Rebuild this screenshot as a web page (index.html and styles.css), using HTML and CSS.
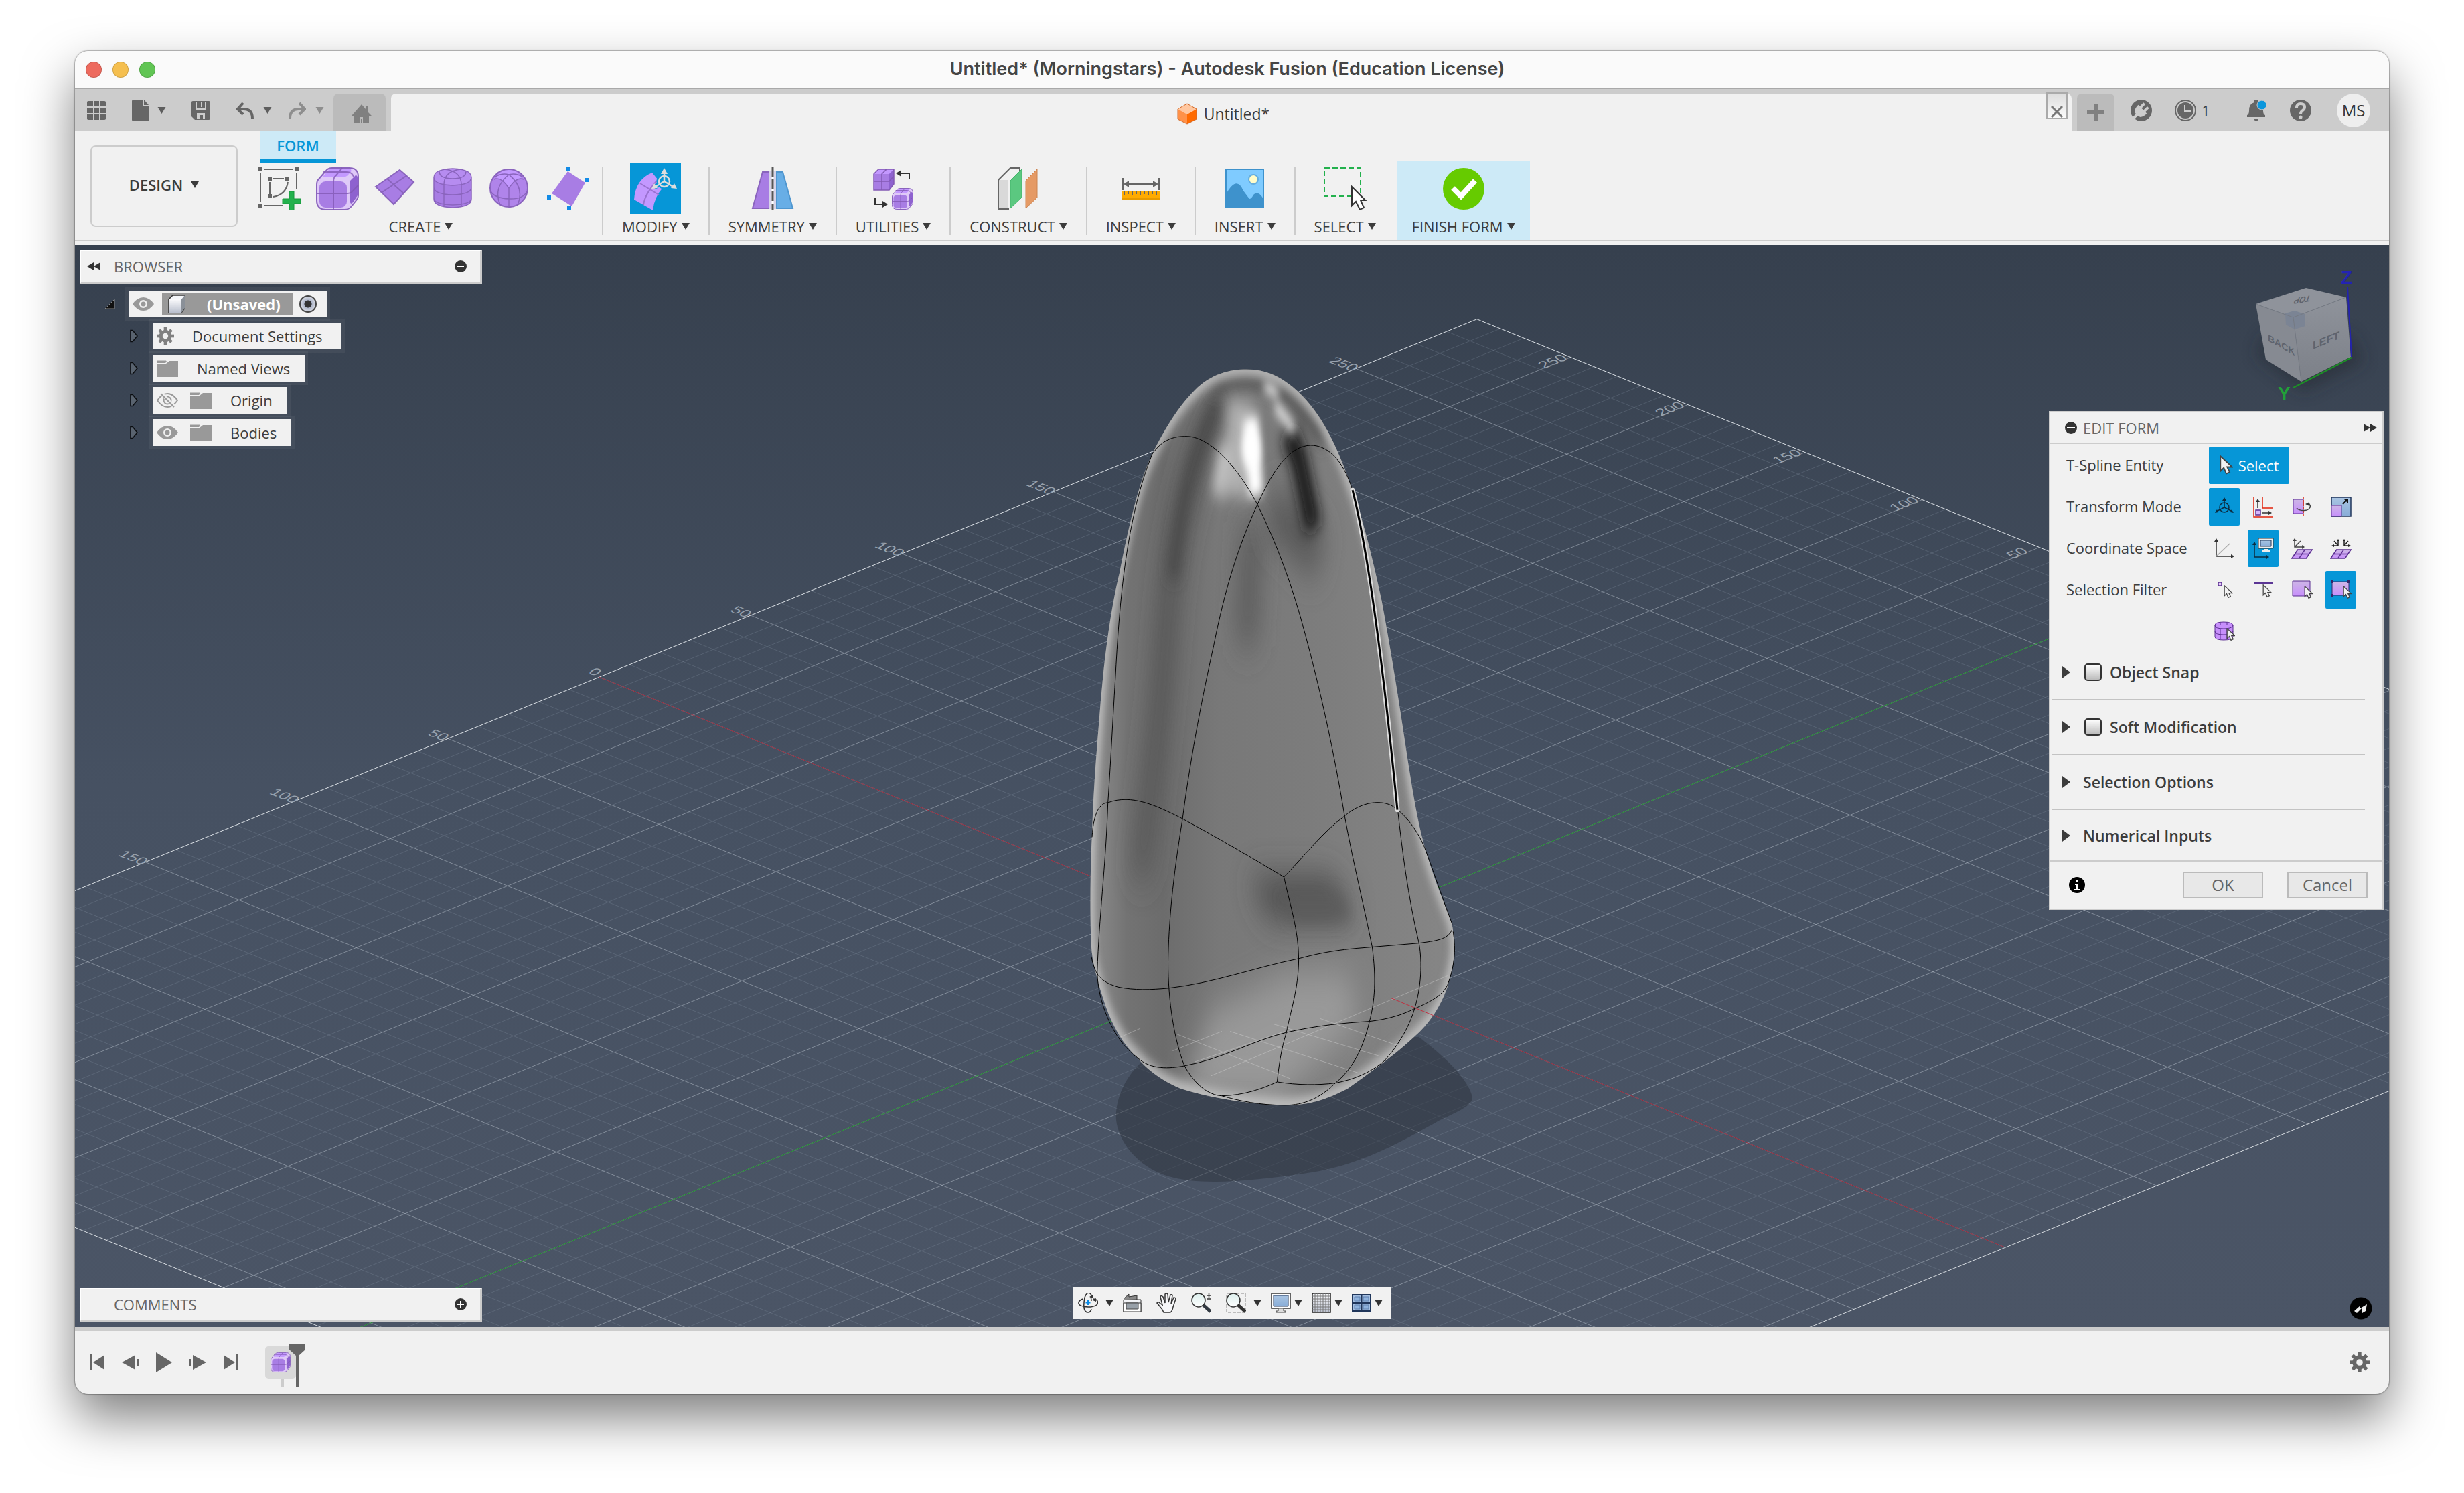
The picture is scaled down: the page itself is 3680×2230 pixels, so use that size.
FILE: index.html
```html
<!DOCTYPE html>
<html lang="en">

<head>
    <meta charset="UTF-8">
    <meta name="viewport" content="width=device-width, initial-scale=1.0">
    <title>Untitled* (Morningstars) - Autodesk Fusion (Education License)</title>
    <link rel="stylesheet" href="styles.css">
</head>

<body>
    <!-- shared icons -->
    <svg class="defs" aria-hidden="true">
        <defs>
            <linearGradient id="glass" x1="0" y1="0" x2="0" y2="1">
                <stop offset="0" stop-color="#dcefed" /><stop offset="1" stop-color="#fff" />
            </linearGradient>
            <linearGradient id="screen" x1="0" y1="0" x2="0" y2="1">
                <stop offset="0" stop-color="#a9c4e2" /><stop offset="1" stop-color="#88add8" />
            </linearGradient>
            <linearGradient id="lilac" x1="0" y1="0" x2="0" y2="1">
                <stop offset="0" stop-color="#cdb6e6" /><stop offset="1" stop-color="#c78ffb" />
            </linearGradient>
            <linearGradient id="steel" x1="0" y1="0" x2="0" y2="1">
                <stop offset="0" stop-color="#fafafc" /><stop offset="1" stop-color="#b9bfcd" />
            </linearGradient>
        </defs>
        <symbol id="down" viewBox="0 0 12 10"><path d="M0 0h12L6 10z" fill="currentColor" /></symbol>
        <symbol id="right" viewBox="0 0 12 18"><path d="M0 0l12 9-12 9z" fill="currentColor" /></symbol>
        <symbol id="pointer" viewBox="0 0 16 24"><path d="M1 1v18l4-4 3 7 4-2-3-6h6z" fill="#f2f2f2" stroke="#444" stroke-width="1.500" /></symbol>
        <symbol id="eye" viewBox="0 0 32 20">
            <path d="M0 10Q7 0 16 0t16 10Q25 20 16 20T0 10z" fill="#999" />
            <circle cx="16" cy="10" r="6" fill="#f0f0f0" /><circle cx="16" cy="10" r="3.500" fill="#999" />
        </symbol>
        <symbol id="eye-off" viewBox="0 0 32 22">
            <path d="M1 11Q8 1 16 1t15 10Q24 21 16 21T1 11z" fill="none" stroke="#999" stroke-width="2" />
            <circle cx="16" cy="11" r="5.500" fill="none" stroke="#999" stroke-width="2" />
            <path d="M6 0l21 21" stroke="#f0f0f0" stroke-width="5" /><path d="M6 1l20 20" stroke="#999" stroke-width="2" />
        </symbol>
        <symbol id="folder" viewBox="0 0 32 26">
            <path d="M0 1.500h14l1 1.500-2 2H0z M0 6h14l5-4h13v24H0z" fill="#999" />
        </symbol>
        <symbol id="gear" viewBox="0 0 28 28">
            <g fill="currentColor">
                <path id="tooth" d="M11.500 0h5v28h-5z" />
                <use href="#tooth" transform="rotate(45 14 14)" />
                <use href="#tooth" transform="rotate(90 14 14)" />
                <use href="#tooth" transform="rotate(135 14 14)" />
                <circle cx="14" cy="14" r="10" />
            </g>
            <circle cx="14" cy="14" r="4.500" fill="#f0f0f0" />
        </symbol>
        <symbol id="tree-arrow" viewBox="0 0 14 20"><path d="M2 1.500h3L12 10l-7 8.500H2z" fill="#59636f" stroke="#0b0d10" stroke-width="1.500" /></symbol>
        <symbol id="rewind" viewBox="0 0 20 12"><path d="M0 6l10-6v12z M10 6l10-6v12z" fill="#333" /></symbol>
        <symbol id="boxform" viewBox="0 0 64 64">
            <path d="M2 20L14 6q4-5 10-5h26q13 0 13 13v28q0 3-2 6L53 58q-4 5-10 5H15Q1 63 1 49V26q0-3 1-6z" fill="#dfc9f8" stroke="#8a64bd" stroke-width="2" />
            <rect x="5" y="21" width="41" height="39" rx="9" fill="#a87de4" />
            <path d="M10 14l8-9q2-3 6-3h24q6 0 4 5l-6 6q-3 2-6 2z" fill="#c398ff" />
            <path d="M51 20l8-8q3 0 3 4v26l-6 9q-5 6-5 0z" fill="#8e62cf" />
            <path d="M1 39h46q5 0 9-5l7-7 M26 63V21q0-6 4-9l9-11 M11 7h34q9 0 11 7" fill="none" stroke="#8259b4" stroke-width="2" opacity=".8" />
        </symbol>
        <symbol id="plane" viewBox="0 0 30 14"><path d="M9 1h20l-8 12H1z" fill="url(#lilac)" stroke="#5b2e91" stroke-width="1.500" /><path d="M19 1l-8 12 M5 7h20" stroke="#5b2e91" stroke-width="1.500" /></symbol>
    </svg>

    <main class="window">
        <header class="titlebar">
            <div class="lights"><i class="red"></i><i class="yellow"></i><i class="green"></i></div>
            <h1>Untitled* (Morningstars) - Autodesk Fusion (Education License)</h1>
        </header>

        <nav class="tabbar">
            <div class="tools">
                <button aria-label="Data panel"><svg width="28" height="28" fill="#666"><path d="M0 2q0-2 2-2h7v8H0z M10 0h8v8h-8z M19 0h7q2 0 2 2v6h-9z M0 10h9v8H0z M10 10h8v8h-8z M19 10h9v8h-9z M0 20h9v8H2q-2 0-2-2z M10 20h8v8h-8z M19 20h9v6q0 2-2 2h-7z" /></svg></button>
                <button aria-label="File"><svg width="26" height="32" fill="#666"><path d="M2 0h14v10h10v20q0 2-2 2H2q-2 0-2-2V2q0-2 2-2z M18 0l7 8h-7z" /></svg><svg class="drop" width="15" height="10"><use href="#down" /></svg></button>
                <button aria-label="Save"><svg width="28" height="28"><path d="M2 0h24q2 0 2 2v24q0 2-2 2H5l-5-5V2q0-2 2-2z" fill="#666" /><path d="M6 2h2v9h12V2h2v11H6z M8 18h12v8h-3v-5h-4v5H8z M14 2h2v7h-2z" fill="#ccc" /></svg></button>
                <button aria-label="Undo"><svg width="26" height="24"><path d="M10 1L2 10l8 8 M2 10h9q13 0 13 14" fill="none" stroke="#666" stroke-width="4" /></svg><svg class="drop wide" width="15" height="10"><use href="#down" /></svg></button>
                <button class="off" aria-label="Redo"><svg width="26" height="24"><path d="M16 1l8 9-8 8 M24 10h-9Q2 10 2 24" fill="none" stroke="#8e8e8e" stroke-width="4" /></svg><svg class="drop wide" width="15" height="10"><use href="#down" /></svg></button>
            </div>
            <button class="tab home" aria-label="Home"><svg width="30" height="28" fill="#808080"><path d="M15 0l6 7V3h4v9l5 5h-4v11H17v-9h-4v9H4V17H0z M14 21h2v7h-2z" /></svg></button>
            <div class="tab document">
                <svg width="30" height="32"><path d="M15 1L1 9v15l14 7z" fill="#ff9148" /><path d="M15 1l14 8v15l-14 7z" fill="#ff6a00" /><path d="M15 1l14 8-14 8L1 9z" fill="#ffc7a0" /><path d="M15 1l14 8v15l-14 7L1 24V9z" fill="none" stroke="#d0692a" /></svg>
                <span>Untitled*</span>
                <button class="close" aria-label="Close tab"><svg width="18" height="18"><path d="M1 1l16 16M17 1L1 17" stroke="#777" stroke-width="3" /></svg></button>
            </div>
            <button class="tab add" aria-label="New design"><svg width="26" height="26"><path d="M13 0v26M0 13h26" stroke="#808080" stroke-width="6" /></svg></button>
            <div class="status">
                <button aria-label="Extensions"><svg width="32" height="32"><circle cx="16" cy="16" r="16" fill="#666" /><g transform="translate(15 17) rotate(45)" fill="#ccc"><path d="M-9-4H9v3q-1 9-7 9V18h-4V8Q-8 8-9-1z" /><path d="M-6-12h4v9h-4z M2-12h4v9H2z" /></g></svg></button>
                <button aria-label="Job status"><svg width="32" height="32"><circle cx="16" cy="16" r="15" fill="none" stroke="#666" stroke-width="2" /><circle cx="16" cy="16" r="12" fill="#666" /><path d="M15 8v9h9" fill="none" stroke="#ccc" stroke-width="2" /></svg><b>1</b></button>
                <button aria-label="Notifications"><svg width="30" height="32"><path d="M11 0h5v4q8 2 8 12 0 6 3 7v3H0v-3q3-1 3-7Q3 6 11 4z M9 28h9q-4 7-9 0z" fill="#666" /><circle cx="22" cy="8" r="7" fill="#0a96dc" stroke="#ccc" /></svg></button>
                <button aria-label="Help"><svg width="32" height="32"><circle cx="16" cy="16" r="16" fill="#666" /><path d="M10 12q0-6 6-6t6 5q0 3-3 5t-3 5" fill="none" stroke="#ccc" stroke-width="4" /><circle cx="16" cy="26" r="2.500" fill="#ccc" /></svg></button>
                <button class="avatar">MS</button>
            </div>
        </nav>

        <section class="ribbon">
            <button class="workspace">DESIGN <svg width="12" height="10"><use href="#down" /></svg></button>
            <div class="ribbon-main">
                <button class="form-tab">FORM</button>
                <div class="groups">
                    <div class="group create">
                        <div class="icons">
                            <button aria-label="Create Sketch"><svg width="64" height="64" viewBox="0 0 64 64">
                                <path d="M9 3h43 M3 9v43 M57 9v24 M9 57h28 M22 17h16 M17 22v18 M44 22q-3 19-22 22" fill="none" stroke="#666" stroke-width="2" />
                                <path d="M0 0h6v6H0z M54 0h6v6h-6z M0 54h6v6H0z M14 14h6v6h-6z M40 14h6v6h-6z M14 40h6v6h-6z" fill="#666" />
                                <path d="M46 36h7v11h10v7H53v10h-7V54H36v-7h10z" fill="#23b14d" stroke="#18963c" stroke-width="1" /></svg></button>
                            <button aria-label="Box"><svg width="64" height="64"><use href="#boxform" /></svg></button>
                            <button aria-label="Plane"><svg width="64" height="64" viewBox="0 0 64 64"><path d="M3 29L39 4l21 18-30 33z M20 17l25 22 M13 37L50 12" fill="#a87de4" stroke="#8a64bd" stroke-width="2" /></svg></button>
                            <button aria-label="Cylinder"><svg width="64" height="64" viewBox="0 0 64 64">
                                <path d="M4 15q0-12 28-13 28 1 28 13v32q0 12-28 13Q4 59 4 47z" fill="#a87de4" /><path d="M4 15q0-12 28-13 28 1 28 13 0 11-28 12Q4 26 4 15z" fill="#b68cf0" />
                                <path d="M4 15q0-12 28-13 28 1 28 13v32q0 12-28 13Q4 59 4 47z M4 15q0 11 28 12 28-1 28-12 M4 30q0 10 28 11 28-1 28-11 M4 46q0 9 28 10 28-1 28-10 M19 25v33 M45 25v33 M12 6q0 11 20 11T52 6 M19 25Q20 5 45 3 M45 25Q44 5 19 3" fill="none" stroke="#8a64bd" stroke-width="1.500" /></svg></button>
                            <button aria-label="Quadball"><svg width="64" height="64" viewBox="0 0 64 64"><circle cx="30" cy="31" r="28" fill="#b084ea" /><path d="M10 18q8-3 20 12 12-15 20-12Q42 3 30 3T10 18z" fill="#c398ff" />
                                <circle cx="30" cy="31" r="28" fill="none" stroke="#8a64bd" stroke-width="2" />
                                <path d="M30 31V59 M30 31Q18 13 8 18 M30 31Q42 13 52 18 M30 11Q6 30 17 56 M30 11Q54 30 43 56 M3 36q6 10 27 11t27-11 M10 14q10-6 20-3 10-3 20 3" fill="none" stroke="#8a64bd" stroke-width="1.500" /></svg></button>
                            <button aria-label="Face"><svg width="64" height="64" viewBox="0 0 64 64"><path d="M32 6l26 17-20 35L8 39z" fill="#a87de4" /><path d="M29 0h6v6h-6z M58 16h6v6h-6z M1 42h6v6H1z M31 58h6v6h-6z" fill="#128be6" /></svg></button>
                        </div>
                        <button class="label">CREATE<svg width="12" height="10"><use href="#down" /></svg></button>
                    </div>
                    <i class="sep"></i>
                    <div class="group">
                        <div class="icons"><button class="on" aria-label="Edit Form"><svg width="76" height="76" viewBox="0 0 76 76">
                            <path d="M6 54Q8 24 33 14l17 21Q36 50 34 70z" fill="#c398ff" /><path d="M20 62Q22 46 40 26 M15 30l28 17" fill="none" stroke="#9a72d0" stroke-width="2" />
                            <g stroke="#0696d7" stroke-width="7" fill="none"><circle cx="51" cy="27" r="8" /><path d="M51 27V12 M51 27L36 36 M51 27l15 9" /></g>
                            <g stroke="#ddd" stroke-width="2.500" fill="none"><circle cx="51" cy="27" r="8" /><path d="M51 27V12 M51 27L36 36 M51 27l15 9" /></g>
                            <path d="M46 16l5-9 5 9z M32 38l4-8 5 7z M70 38l-4-8-5 7z" fill="#ddd" /></svg></button></div>
                        <button class="label">MODIFY<svg width="12" height="10"><use href="#down" /></svg></button>
                    </div>
                    <i class="sep"></i>
                    <div class="group">
                        <div class="icons"><button aria-label="Mirror"><svg width="64" height="64" viewBox="0 0 64 64">
                            <path d="M17 7h10v54H2z" fill="#a87de4" stroke="#8a64bd" stroke-width="2" /><path d="M37 7h10l15 54H37z" fill="#68aee6" stroke="#4f96cf" stroke-width="2" />
                            <path d="M27 6h10v56H27z" fill="#d6d3e8" /><path d="M32 0v64" stroke="#fff" stroke-width="3" /><path d="M32 0v64" stroke="#555" stroke-width="3" stroke-dasharray="14 4" /></svg></button></div>
                        <button class="label">SYMMETRY<svg width="12" height="10"><use href="#down" /></svg></button>
                    </div>
                    <i class="sep"></i>
                    <div class="group">
                        <div class="icons"><button aria-label="Convert"><svg width="64" height="64" viewBox="0 0 64 64">
                            <path d="M3 10l7-7h23v22l-7 9H3z" fill="#a87de4" /><path d="M3 10l7-7h23l-7 7z" fill="#c398ff" /><path d="M26 10l7-7v22l-7 9z" fill="#8e62cf" />
                            <path d="M3 10l7-7h23v22l-7 9H3z M15 34V10l7-7 M3 21h23l7-8" fill="none" stroke="#8259b4" stroke-width="1.500" />
                            <svg x="30" y="31" width="32" height="32"><use href="#boxform" /></svg>
                            <path d="M56 18V9H42 M5 46v9h14" fill="none" stroke="#333" stroke-width="2" /><path d="M36 9l8-5v10z M24 55l-8-5v10z" fill="#333" /></svg></button></div>
                        <button class="label">UTILITIES<svg width="12" height="10"><use href="#down" /></svg></button>
                    </div>
                    <i class="sep"></i>
                    <div class="group">
                        <div class="icons"><button aria-label="Offset Plane"><svg width="64" height="64" viewBox="0 0 64 64">
                            <path d="M2 19h14v43H2z" fill="#d9d9d9" /><path d="M18 62H2V19L20 1h14v4" fill="none" stroke="#666" stroke-width="2" />
                            <path d="M20 20L37 3v42L20 61z" fill="#5bc880" stroke="#46b56c" /><path d="M43 20L60 3v42L43 61z" fill="#e59a65" stroke="#cc8450" /></svg></button></div>
                        <button class="label">CONSTRUCT<svg width="12" height="10"><use href="#down" /></svg></button>
                    </div>
                    <i class="sep"></i>
                    <div class="group">
                        <div class="icons"><button aria-label="Measure"><svg width="64" height="64" viewBox="0 0 64 64">
                            <path d="M5 16v18 M59 16v18 M8 25h48" stroke="#666" stroke-width="2" /><path d="M6 25l8-5v10z M58 25l-8-5v10z" fill="#666" />
                            <path d="M4 36h56v12H4z" fill="#ffab00" /><path d="M4 46h56v2H4z" fill="#e79a00" /><path d="M7 36v6 M13 36v4 M19 36v6 M25 36v4 M31 36v6 M37 36v4 M43 36v6 M49 36v4 M55 36v6" stroke="#666" stroke-width="2" /></svg></button></div>
                        <button class="label">INSPECT<svg width="12" height="10"><use href="#down" /></svg></button>
                    </div>
                    <i class="sep"></i>
                    <div class="group">
                        <div class="icons"><button aria-label="Canvas"><svg width="64" height="64" viewBox="0 0 64 64">
                            <path d="M4 3h56v56H4z" fill="#7fcbff" stroke="#3e92cc" stroke-width="2" /><path d="M4 40q16-29 26-5l9 12q3 0 6-6 7-7 15 6v12H4z" fill="#3e92cc" />
                            <circle cx="45" cy="18" r="7" fill="#fffcc9" stroke="#64addd" stroke-width="2" /></svg></button></div>
                        <button class="label">INSERT<svg width="12" height="10"><use href="#down" /></svg></button>
                    </div>
                    <i class="sep"></i>
                    <div class="group">
                        <div class="icons"><button aria-label="Select"><svg width="64" height="64" viewBox="0 0 64 64">
                            <path d="M1 1h54v42H1z" fill="none" stroke="#23b14d" stroke-width="2" stroke-dasharray="8 4" />
                            <path d="M42 29v28l6-6 6 12 6-3-5-11h7z" fill="#fff" stroke="#333" stroke-width="2" /></svg></button></div>
                        <button class="label">SELECT<svg width="12" height="10"><use href="#down" /></svg></button>
                    </div>
                    <div class="group finish">
                        <div class="icons"><button aria-label="Finish Form"><svg width="64" height="64" viewBox="0 0 64 64"><circle cx="32" cy="32" r="31" fill="#66cb00" /><path d="M16 31l12 12 21-23" fill="none" stroke="#fff" stroke-width="8" /></svg></button></div>
                        <button class="label">FINISH FORM<svg width="12" height="10"><use href="#down" /></svg></button>
                    </div>
                </div>
            </div>
        </section>

        <section class="viewport">
            <svg class="scene" viewBox="112 366 3456 1616" preserveAspectRatio="xMidYMid slice">
                <defs>
                    <linearGradient id="sky" x1="0" y1="0" x2="0" y2="1">
                        <stop offset="0" stop-color="#36404e" /><stop offset=".5" stop-color="#465162" /><stop offset="1" stop-color="#4b5566" />
                    </linearGradient>
                    <linearGradient id="metal" x1="0" y1="0" x2="1" y2="0">
                        <stop offset="0" stop-color="#8e8e8e" /><stop offset=".1" stop-color="#737373" /><stop offset=".2" stop-color="#6c6c6c" /><stop offset=".35" stop-color="#787878" />
                        <stop offset=".6" stop-color="#7c7c7c" /><stop offset="1" stop-color="#868686" />
                    </linearGradient>
                    <linearGradient id="cube-left" x1="0" y1="0" x2="0" y2="1"><stop offset="0" stop-color="#8f939b" /><stop offset="1" stop-color="#7c8088" /></linearGradient>
                    <filter id="blur" filterUnits="userSpaceOnUse" x="-100" y="-100" width="1800" height="1700"><feGaussianBlur stdDeviation="22 16" /></filter>
                    <filter id="blur-s" filterUnits="userSpaceOnUse" x="-100" y="-100" width="1800" height="1700"><feGaussianBlur stdDeviation="13 11" /></filter>
                    <filter id="blur-l" filterUnits="userSpaceOnUse" x="-100" y="-100" width="1800" height="1700"><feGaussianBlur stdDeviation="40 34" /></filter>
                    <filter id="soft" x="-50%" y="-50%" width="200%" height="200%"><feGaussianBlur stdDeviation="12" /></filter>
                    <path id="body" d="M690 62C760 62 820 75 880 103C960 140 1020 195 1078 280C1120 340 1150 400 1185 480C1215 560 1245 650 1275 750C1300 830 1320 890 1350 935C1370 970 1390 995 1410 1020C1425 1040 1443 1055 1446 1075C1455 1100 1455 1125 1425 1175C1400 1210 1360 1240 1310 1262C1240 1295 1140 1330 1060 1358C980 1378 920 1388 830 1388C700 1386 560 1375 450 1358C370 1342 320 1320 290 1302C240 1280 200 1245 175 1210C145 1165 125 1130 122 1100C117 1050 118 960 125 900C128 840 138 770 150 700C165 600 190 500 225 430C260 340 300 260 345 215C400 160 450 125 500 100C560 70 630 62 690 62z" />
                    <clipPath id="body-clip"><use href="#body" /></clipPath>
                </defs>
                <rect x="112" y="366" width="3456" height="1616" fill="url(#sky)" />

                <!-- ground plane, one unit = 1 mm, x down right and y up right -->
                <g transform="matrix(3.5 1.42 -4.52 1.843 1910 1423)" fill="none">
                    <path id="minor" class="line" stroke="#8491a3" stroke-opacity=".3" />
                    <path id="major" class="line" stroke="#b4bec8" stroke-opacity=".55" />
                    <path class="line" d="M-290-290H310V310H-290z" stroke="#d8dde2" />
                    <path class="line" d="M-290 0H310" stroke="#97283a" />
                    <path class="line" d="M0-290V310" stroke="#1f8e2c" />
                </g>
                <g class="ticks" id="ticks"></g>

                <g transform="translate(1580 500) scale(.4082 .8291)">
                    <path d="M213 1400C225 1350 280 1320 330 1300L1320 1265C1400 1295 1495 1335 1516 1372C1522 1392 1430 1405 1380 1420C1250 1455 1100 1498 900 1511C700 1525 500 1535 380 1512C270 1490 205 1440 213 1400z" fill="#2c323c" fill-opacity=".5" />
                    <use href="#body" fill="url(#metal)" />
                    <g clip-path="url(#body-clip)">
                        <path d="M600 120C500 220 430 330 400 520S340 800 300 980" fill="none" stroke="#4a4a4a" stroke-width="60" stroke-opacity=".8" filter="url(#blur-l)" />
                        <path d="M590 120C500 200 450 300 420 440" fill="none" stroke="#424242" stroke-width="40" stroke-opacity=".8" filter="url(#blur)" />
                        <path d="M710 340L690 560" stroke="#505050" stroke-width="70" stroke-opacity=".8" filter="url(#blur-l)" />
                        <path d="M780 310L960 400" stroke="#565656" stroke-width="90" filter="url(#blur-l)" />
                        <path d="M560 90Q800 30 980 190" fill="none" stroke="#4a4a4a" stroke-width="36" filter="url(#blur)" />
                        <path d="M840 175L880 220L935 350" fill="none" stroke="#161616" stroke-width="58" filter="url(#blur)" />
                        <path d="M675 120L650 290" stroke="#b0b0b0" stroke-width="100" filter="url(#blur)" />
                        <path d="M615 200L585 290" stroke="#d6d6d6" stroke-width="36" filter="url(#blur)" />
                        <path d="M705 150L725 290" stroke="#fff" stroke-width="54" filter="url(#blur-s)" />
                        <ellipse cx="706" cy="205" rx="32" ry="36" fill="#fff" filter="url(#blur-s)" />
                        <path d="M755 92L805 106 M795 128L865 172" stroke="#e8e8e8" stroke-width="20" filter="url(#blur-s)" />
                        <path d="M690 980H1000L1090 1050H780z" fill="#4a4a4a" filter="url(#blur-l)" />
                        <path d="M820 1010H1030L1080 1052H850z" fill="#5c5c5c" filter="url(#blur)" />
                        <path d="M560 1220L840 1150H1060L1100 1240L800 1380H450z" fill="#a0a0a0" fill-opacity=".8" filter="url(#blur-l)" />
                        <use href="#body" fill="none" stroke="#c8c8c8" stroke-width="24" filter="url(#blur-s)" />
                        <path d="M300 1250L230 1265 M435 1260L850 1340 M630 1255L1100 1330 M790 1242L1180 1300 M960 1232L1240 1280 M560 1335L1425 1155 M420 1290L600 1255 M500 1310L830 1255" stroke="#ddd" stroke-opacity=".4" class="line" />
                        <path d="M1220 1195L1500 1252" stroke="#c03040" class="line" />
                    </g>
                    <g class="edges" fill="none" stroke="#000">
                        <path d="M345 215C380 190 420 182 475 183C560 185 660 240 730 306C800 375 860 455 905 540C960 640 1010 750 1049 867C1080 950 1120 1030 1150 1103C1165 1160 1160 1200 1140 1237C1110 1300 1060 1330 1015 1348C960 1375 900 1388 830 1388C740 1388 660 1380 600 1371C550 1370 500 1350 463 1317C425 1270 403 1200 403 1130C405 1060 420 980 456 872C480 780 520 670 570 560C610 460 660 380 730 306C790 240 850 200 925 199C980 199 1040 220 1078 280" />
                        <path d="M345 215C250 330 225 480 210 620C200 700 192 780 183 843C175 960 150 1050 144 1148C145 1200 200 1270 290 1302C340 1325 410 1322 463 1317C600 1305 720 1270 836 1257C940 1245 1040 1240 1140 1237C1210 1233 1260 1225 1305 1214C1370 1200 1405 1190 1425 1172" />
                        <path d="M125 905C130 860 155 843 183 843C270 827 360 848 456 872C580 905 720 945 827 977C900 940 970 895 1049 867C1100 845 1170 836 1220 848C1280 865 1330 905 1350 935C1380 975 1410 1020 1443 1062" />
                        <path d="M827 977C850 1030 880 1070 881 1125C880 1180 850 1220 836 1257C815 1290 808 1320 802 1346" />
                        <path d="M122 1120C135 1150 150 1165 220 1175C280 1181 340 1180 405 1177C570 1168 720 1140 880 1124C1000 1108 1080 1106 1150 1103L1321 1096C1380 1092 1430 1090 1443 1070" />
                        <path d="M600 1371C680 1370 750 1358 802 1346C880 1352 950 1352 1015 1348C1080 1342 1140 1330 1190 1310C1250 1280 1290 1240 1305 1214C1335 1165 1330 1120 1321 1096C1280 1010 1260 930 1243 855" />
                        <path d="M1446 1075C1458 1110 1450 1140 1425 1172" />
                        <path class="halo" d="M1078 280C1140 400 1195 620 1242 856" />
                        <path class="picked" d="M1078 280C1140 400 1195 620 1242 856" />
                    </g>
                </g>

                <!-- view cube -->
                <g>
                    <path d="M3370 530L3440 585L3530 540L3510 500H3384z" fill="#20262f" opacity=".5" filter="url(#soft)" />
                    <path d="M3444 430L3369 454l56 20 79-30z" fill="#8f939b" />
                    <path d="M3369 454l56 20 12 96-53-33z" fill="#868a92" />
                    <path d="M3425 474l79-30 7 89-74 37z" fill="url(#cube-left)" />
                    <path d="M3413 468l14-4 15 5 1 18-16 5-13-7z" fill="#7b8494" />
                    <path d="M3369 454l56 20 79-30 M3425 474l12 96" fill="none" stroke="#757a83" />
                    <text class="face" transform="translate(3387 509) skewY(29)">BACK</text>
                    <text class="face left" transform="translate(3454 522) skewY(-22)">LEFT</text>
                    <text class="face top" transform="translate(3452 441) rotate(170) skewX(-30)">TOP</text>
                    <path d="M3506 428l6 105" stroke="#2323ae" stroke-width="2" /><path d="M3512 534l-87 45" stroke="#1c8f26" stroke-width="2" />
                    <text class="axis" x="3496" y="424" fill="#2323b4">Z</text>
                    <text class="axis" x="3402" y="597" fill="#22a038">Y</text>
                </g>
            </svg>

            <section class="browser">
                <h2 class="panel-head"><svg width="20" height="12"><use href="#rewind" /></svg>BROWSER<button aria-label="Collapse browser"><svg width="18" height="18"><circle cx="9" cy="9" r="9" fill="#333" /><path d="M4 9h10" stroke="#fff" stroke-width="2" /></svg></button></h2>
                <ul class="tree">
                    <li class="root"><svg class="arrow" width="16" height="16"><path d="M15 1v14H1z" fill="#111" stroke="#888" /></svg>
                        <div class="node"><svg width="32" height="20"><use href="#eye" /></svg>
                            <span class="chosen"><svg width="26" height="28"><path d="M1 7l6-6h18v19l-5 7H1z" fill="#f4f6fa" stroke="#333" stroke-width="1.500" /><path d="M1 7h19v20H1z" fill="url(#steel)" /><path d="M20 7l5-6v19l-5 7z" fill="#8a9098" /></svg>(Unsaved)</span>
                            <input type="radio" checked aria-label="Activate component"></div></li>
                    <li><svg class="arrow" width="14" height="20"><use href="#tree-arrow" /></svg><div class="node settings"><svg width="26" height="26" color="#808080"><use href="#gear" /></svg>Document Settings</div></li>
                    <li><svg class="arrow" width="14" height="20"><use href="#tree-arrow" /></svg><div class="node views"><svg width="32" height="26"><use href="#folder" /></svg>Named Views</div></li>
                    <li><svg class="arrow" width="14" height="20"><use href="#tree-arrow" /></svg><div class="node"><svg width="32" height="22"><use href="#eye-off" /></svg><svg class="inner" width="32" height="26"><use href="#folder" /></svg>Origin</div></li>
                    <li><svg class="arrow" width="14" height="20"><use href="#tree-arrow" /></svg><div class="node"><svg width="32" height="20"><use href="#eye" /></svg><svg class="inner" width="32" height="26"><use href="#folder" /></svg>Bodies</div></li>
                </ul>
            </section>

            <section class="dialog">
                <h2><svg width="18" height="18"><circle cx="9" cy="9" r="9" fill="#333" /><path d="M3 9h12" stroke="#fff" stroke-width="2" /></svg>EDIT FORM<svg class="forward" width="20" height="12"><use href="#rewind" transform="rotate(180 10 6)" /></svg></h2>
                <div class="fields">
                    <span>T-Spline Entity</span>
                    <div class="options"><button class="select on"><svg width="20" height="30" viewBox="0 0 16 24"><use href="#pointer" /></svg>Select</button></div>
                    <span>Transform Mode</span>
                    <div class="options">
                        <button class="on" aria-label="Multi"><svg width="30" height="30"><g fill="none" stroke="#0c2c40" stroke-width="1.500"><circle cx="15" cy="16" r="7" /><path d="M15 16V4 M15 16L3 22 M15 16l12 6" /></g><path d="M12 6l3-5 3 5z M1 24l3-5 2 4z M29 24l-3-5-2 4z" fill="#0c2c40" /></svg></button>
                        <button aria-label="Translation"><svg width="32" height="32"><path d="M2 1v30h29 M15 1v17h16" fill="none" stroke="#e2230c" stroke-width="1.500" /><path d="M8 18V7 M14 25h11" stroke="#333" stroke-width="1.500" /><path d="M5 9l3-5 3 5z M24 22l5 3-5 3z" fill="#333" /><path d="M5 21h7v7H5z" fill="#d8b5fb" stroke="#5b2e91" stroke-width="1.500" /></svg></button>
                        <button aria-label="Rotation"><svg width="32" height="32"><path d="M3 5h15v21H3z" fill="url(#lilac)" stroke="#5b2e91" /><path d="M18 1v28" stroke="#e2230c" stroke-width="1.500" stroke-dasharray="4 1" /><path d="M8 18q5 5 15 3 8-3 4-9h-4" fill="none" stroke="#444" stroke-width="1.500" /><path d="M21 12l6-3v6z" fill="#333" /></svg></button>
                        <button aria-label="Scale"><svg width="32" height="32"><path d="M2 2h29v28H2z" fill="url(#screen)" stroke="#20365b" stroke-width="1.500" /><path d="M2 14h15v16H2z" fill="url(#lilac)" stroke="#5b2e91" /><path d="M19 12l6-6" stroke="#111" stroke-width="2" /><path d="M21 5h6v6z" fill="#111" /></svg></button>
                    </div>
                    <span>Coordinate Space</span>
                    <div class="options">
                        <button aria-label="World space"><svg width="32" height="32"><path d="M4 5v23h24" fill="none" stroke="#333" stroke-width="1.500" /><path d="M4 28L24 9" stroke="#aaa" stroke-width="1.500" /><path d="M1 6l3-5 3 5z M26 25l5 3-5 3z" fill="#333" /></svg></button>
                        <button class="on" aria-label="View space"><svg width="32" height="32"><path d="M3 9v20h20" fill="none" stroke="#0c2c40" stroke-width="1.500" /><path d="M0 11l3-5 3 5z M21 26l4 3-4 3z" fill="#0c2c40" /><path d="M9 1h22v15H9z" fill="#eee" stroke="#333" /><path d="M12 4h16v9H12z" fill="url(#screen)" stroke="#20365b" /><path d="M17 17h6v2h3v2H14v-2h3z" fill="#eee" /></svg></button>
                        <button aria-label="Selection space"><svg width="32" height="32"><path d="M5 2v12h13 M5 14l9-9" fill="none" stroke="#444" stroke-width="1.500" /><path d="M2 5l3-4 3 4z M16 11l4 3-4 3z" fill="#444" /><svg y="17" width="32" height="15"><use href="#plane" /></svg></svg></button>
                        <button aria-label="Local per entity"><svg width="32" height="32"><path d="M12 4v8H5 M6 5l6 7 M21 4v8h7 M27 5l-6 7" fill="none" stroke="#222" stroke-width="1.500" /><path d="M10 5l2-3 2 3z M19 5l2-3 2 3z M6 10l-4 2 4 2z M27 10l4 2-4 2z" fill="#222" /><svg y="17" width="32" height="15"><use href="#plane" /></svg></svg></button>
                    </div>
                    <span>Selection Filter</span>
                    <div class="options">
                        <button aria-label="Vertex"><svg width="32" height="32"><path d="M7 5h5v5H7z" fill="#e2cdf8" stroke="#5b2e91" stroke-width="1.500" /><svg x="15" y="9" width="14" height="20"><use href="#pointer" /></svg></svg></button>
                        <button aria-label="Edge"><svg width="32" height="32"><path d="M2 6h28" stroke="#5b3695" stroke-width="3" /><svg x="15" y="8" width="14" height="20"><use href="#pointer" /></svg></svg></button>
                        <button aria-label="Face"><svg width="32" height="32"><path d="M2 3h26v22H2z" fill="url(#lilac)" stroke="#5b2e91" /><svg x="19" y="10" width="14" height="20"><use href="#pointer" /></svg></svg></button>
                        <button class="on" aria-label="All"><svg width="32" height="32"><path d="M3 4h25v20H3z" fill="url(#lilac)" stroke="#35266a" /><path d="M1 2h4v4H1z M26 2h4v4h-4z M1 22h4v4H1z" fill="#35266a" /><svg x="19" y="10" width="14" height="20"><use href="#pointer" /></svg></svg></button>
                        <button aria-label="Body"><svg width="32" height="32"><path d="M2 7v17q1 5 14 5t13-5V7q0-5-14-5T2 7z" fill="#c78ffb" /><path d="M2 7q0-5 13-5t14 5v17q-1 5-14 5T2 24z M2 7q0 5 13 5t14-5 M2 16q0 5 13 5t14-5 M10 12v16 M20 12v16 M10 2v5 M20 2v5" fill="none" stroke="#5b2e91" /><svg x="19" y="11" width="14" height="20"><use href="#pointer" /></svg></svg></button>
                    </div>
                </div>
                <div class="sections">
                    <div><svg width="12" height="18"><use href="#right" /></svg><label><input type="checkbox">Object Snap</label></div>
                    <div><svg width="12" height="18"><use href="#right" /></svg><label><input type="checkbox">Soft Modification</label></div>
                    <div><svg width="12" height="18"><use href="#right" /></svg>Selection Options</div>
                    <div><svg width="12" height="18"><use href="#right" /></svg>Numerical Inputs</div>
                </div>
                <footer><svg width="24" height="24"><circle cx="12" cy="12" r="12" /><path d="M9 10h5v8h2v2H8v-2h2v-6H9z M10 5h4v3h-4z" fill="#fff" /></svg><button>OK</button><button>Cancel</button></footer>
            </section>

            <h2 class="panel-head comments">COMMENTS<button aria-label="Add comment"><svg width="18" height="18"><circle cx="9" cy="9" r="9" fill="#333" /><path d="M4 9h10M9 4v10" stroke="#fff" stroke-width="2" /></svg></button></h2>

            <div class="navbar">
                <button aria-label="Orbit"><svg width="30" height="30" fill="none" stroke="#333" stroke-width="1.500"><path d="M20 3Q14-4 10 7 6 29 15 29q4 0 5-5 M7 9q-7 3-6 7 2 5 18 5 13-2 10-9-2-3-7-3 M20 12q0-3-1-6" /><path d="M15 11v7M11.500 14.500h7" stroke="#0a8be6" stroke-width="2" /><path d="M17 6l5-3v5z M22 11l5-3v5z" fill="#333" stroke="none" /></svg><svg class="drop" width="12" height="10"><use href="#down" /></svg></button>
                <button class="plain" aria-label="Look At"><svg width="28" height="28"><path d="M1 8l8-7v4l12-2v6" fill="#888" stroke="#333" /><path d="M1 9h26v18H1z" fill="url(#steel)" stroke="#333" /><path d="M1 14h26v13H1z" fill="#fff" stroke="#333" /><path d="M5 14h18v9H5z" fill="#98a0a8" stroke="#444" /></svg></button>
                <button class="plain" aria-label="Pan"><svg width="30" height="30"><path d="M11 29q-2-5-6-9l-4-5q1-3 4 0l4 3-3-12q1-3 4 0l3 9V2q2-2 4 0l1 12 3-11q3-1 3 1l-2 12 4-9q3 0 3 2l-4 12q-1 6-4 8z" fill="#f7f7f9" stroke="#333" stroke-width="1.500" /></svg></button>
                <button class="plain" aria-label="Zoom"><svg width="30" height="30"><path d="M18 18l11 10" stroke="#333a42" stroke-width="5" /><circle cx="11" cy="11" r="10" fill="url(#glass)" stroke="#333" stroke-width="1.500" /><path d="M23 4h7M26.500 1v6M23 9h7" stroke="#333" stroke-width="1.500" /></svg></button>
                <button aria-label="Fit"><svg width="30" height="30"><path d="M1 1h28v28H1z" fill="none" stroke="#888" stroke-dasharray="5 2" /><path d="M18 18l11 10" stroke="#333" stroke-width="5" /><circle cx="11" cy="11" r="10" fill="url(#glass)" stroke="#333" stroke-width="1.500" /></svg><svg class="drop" width="12" height="10"><use href="#down" /></svg></button>
                <button aria-label="Display Settings"><svg width="30" height="30"><path d="M1 1h28v22H1z" fill="#fff" stroke="#333" stroke-width="1.500" /><path d="M4 4h22v16H4z" fill="url(#screen)" stroke="#20365b" /><path d="M11 23h8v4h3v2H8v-2h3z" fill="#ddd" stroke="#444" /></svg><svg class="drop near" width="12" height="10"><use href="#down" /></svg></button>
                <button aria-label="Grid and Snaps"><svg width="29" height="30"><path d="M1 1h27v28H1z" fill="url(#steel)" stroke="#222" stroke-width="1.500" /><path d="M5 1v28M9 1v28M13 1v28M17 1v28M21 1v28M25 1v28M1 5h27M1 9h27M1 13h27M1 17h27M1 21h27M1 25h27" stroke="#777" /></svg><svg class="drop near" width="12" height="10"><use href="#down" /></svg></button>
                <button aria-label="Viewports"><svg width="29" height="26"><path d="M1 1h27v24H1z" fill="#a5c0e2" stroke="#20365b" stroke-width="2" /><path d="M14.500 1v24M1 13h27" stroke="#20365b" stroke-width="2" /><path d="M4 4h8v6H4z M17 4h8v6h-8z M4 16h8v6H4z M17 16h8v6h-8z" fill="#8fb3de" stroke="#5f80b0" /></svg><svg class="drop near" width="12" height="10"><use href="#down" /></svg></button>
            </div>
            <button class="assist" aria-label="Assistant"><svg width="34" height="34"><circle cx="17" cy="17" r="16.500" fill="#000" /><path d="M7 21l9-8v4l10-6-2 10-5 3v-8l-8 8z" fill="#eee" /></svg></button>
        </section>

        <footer class="timeline">
            <div class="playback">
                <button aria-label="Go to start"><svg width="22" height="28"><path d="M0 2h4v24H0z M22 3v22L5 14z" fill="#666" /></svg></button>
                <button aria-label="Step back"><svg width="26" height="24"><path d="M20 1v22L0 12z M22 7h4v10h-4z" fill="#666" /></svg></button>
                <button aria-label="Play"><svg width="24" height="30"><path d="M0 0l24 15L0 30z" fill="#666" /></svg></button>
                <button aria-label="Step forward"><svg width="26" height="24"><path d="M6 1v22l20-11z M0 7h4v10H0z" fill="#666" /></svg></button>
                <button aria-label="Go to end"><svg width="22" height="24"><path d="M18 0h4v24h-4z M0 1v22l17-11z" fill="#666" /></svg></button>
            </div>
            <button class="feature" aria-label="Form"><svg width="30" height="30"><use href="#boxform" /></svg><svg class="marker" width="24" height="64"><path d="M0 0h24v9L14 18v46h-4V18L0 9z" fill="#666" /></svg></button>
            <button class="prefs" aria-label="Settings"><svg width="30" height="30" color="#666"><use href="#gear" /></svg></button>
        </footer>
    </main>

    <script>
        var minor = "", major = ""
        for (let i = -290; i < 310; i += 10) {
            const line = "M" + i + " -290V310M-290 " + i + "H310"
            if (i % 50 === 0) {
                major += line
            } else {
                minor += line
            }
        }
        document.querySelector("#minor").setAttribute("d", minor)
        document.querySelector("#major").setAttribute("d", major)

        // numbers along the two far borders of the grid
        var ticks = ""
        for (let n = -150; n <= 250; n += 50) {
            // y axis numbers, on the left border
            if (n !== 200) {
                const x = 895 + n * 4.52 - (Math.abs(n) > 50 ? 42 : Math.abs(n) > 0 ? 32 : 18)
                const y = 1011 - n * 1.843 - (Math.abs(n) > 50 ? 10 : 6)
                ticks += `<text transform="matrix(.92 .37 -.7 .5 ${x} ${y})">${Math.abs(n)}</text>`
            }
            // x axis numbers, on the right border
            if (n > 0) {
                const x = 3221 - n * 3.5 - 40
                const y = 888 - n * 1.42 + 18
                ticks += `<text transform="matrix(.92 -.37 .7 .5 ${x} ${y})">${n}</text>`
            }
        }
        document.querySelector("#ticks").innerHTML = ticks
    </script>
</body>

</html>
```
FILE: styles.css
```css
* {
    box-sizing: border-box;
}

body {
    margin: 0;
    padding: 76px 112px 148px;
    background: #fff;
    color: #3c3c3c;
    font: 22px/28px "Open Sans", "Noto Sans", sans-serif;
}

button {
    display: flex;
    align-items: center;
    justify-content: center;
    margin: 0;
    padding: 0;
    border: 0;
    background: none;
    color: inherit;
    font: inherit;
}

svg {
    display: block;
    flex: none;
}

h1, h2, ul {
    margin: 0;
    padding: 0;
    list-style: none;
}

.defs {
    position: absolute;
    width: 0;
    height: 0;
}

.window {
    display: flex;
    flex-direction: column;
    min-height: calc(100vh - 224px);
    border-radius: 20px;
    overflow: hidden;
    background: #f1f1f1;
    box-shadow: 0 0 2px 1px rgba(0, 0, 0, .35), 0 36px 76px rgba(0, 0, 0, .5);
}

/* title bar */
.titlebar {
    position: relative;
    height: 57px;
    border-bottom: 1px solid #a9a9a9;
    background: #fafafa;
}

.titlebar h1 {
    font: 600 27px/54px Inter, sans-serif;
    text-align: center;
    padding-right: 14px;
    color: #454545;
}

.lights {
    position: absolute;
    left: 16px;
    top: 16px;
    display: flex;
    gap: 16px;
}

.lights i {
    width: 24px;
    height: 24px;
    border-radius: 50%;
    border: 1px solid rgba(0, 0, 0, .15);
}

.red { background: #ed6a5e; }
.yellow { background: #f5bf4f; }
.green { background: #61c554; }

/* tabs */
.tabbar {
    display: flex;
    height: 63px;
    background: #ccc;
    color: #5e5e5e;
}

.tools {
    display: grid;
    grid-template-columns: 67px 89px 67px 78px 67px;
    padding-left: 18px;
}

.tools button {
    justify-content: flex-start;
}

.tools .drop { margin-left: 11px; }
.tools .wide { margin-left: 13px; }
.tools .off { color: #8e8e8e; }

.tab {
    align-self: flex-end;
    height: 56px;
    border-radius: 7px 7px 0 0;
    background: #bbb;
}

.home {
    width: 78px;
    padding: 4px 0 0 6px;
}

.document {
    position: relative;
    display: flex;
    flex: 1;
    align-items: center;
    justify-content: center;
    gap: 10px;
    margin: 0 8px;
    padding: 3px 24px 0 0;
    background: #f1f1f1;
    color: #3c3c3c;
    font-size: 23px;
}

.close {
    position: absolute;
    right: 6px;
    top: -2px;
    width: 32px;
    height: 40px;
    padding-top: 18px;
    border: 2px solid #aaa;
    background: linear-gradient(#ddd, #fafafa);
}

.add { width: 56px; }

.status {
    display: grid;
    grid-template-columns: 66px 108px 64px 70px 78px;
    padding-left: 24px;
    align-items: center;
}

.status button { justify-content: flex-start; }

.status b {
    margin-left: 8px;
    font-weight: 400;
    color: #3c3c3c;
}

.status .avatar {
    justify-content: center;
    width: 50px;
    height: 50px;
    border-radius: 50%;
    background: #eee;
    color: #333;
    font-size: 24px;
}

/* ribbon */
.ribbon {
    display: flex;
    height: 164px;
    margin-bottom: 6px;
    border-bottom: 1px solid #ccc;
}

.workspace {
    width: 220px;
    height: 122px;
    margin: 21px 3px 0 23px;
    padding-bottom: 4px;
    gap: 12px;
    border: 2px solid #ccc;
    border-radius: 8px;
    font-weight: 600;
}

.form-tab {
    width: 114px;
    height: 47px;
    margin: 0 0 -3px 30px;
    border-bottom: 6px solid #0696d7;
    background: #cdeaf7;
    color: #0696d7;
    font-weight: 600;
}

.groups {
    display: flex;
    height: 119px;
}

.group {
    padding: 4px 28px 0;
}

.sep {
    width: 2px;
    height: 102px;
    margin-top: 9px;
    background: #ccc;
}

.icons {
    display: flex;
    justify-content: center;
    align-items: center;
    height: 76px;
    gap: 22px;
}

.create {
    padding: 4px 19px 0;
}

.create .icons { padding-left: 9px; }
.on { background: #0696d7; }

.label {
    gap: 6px;
    margin: 4px auto 0;
    white-space: nowrap;
}

.finish {
    margin-left: 4px;
    padding: 4px 22px 0;
    background: #cdeaf7;
}

/* 3D viewport */
.viewport {
    position: relative;
    flex: 1;
    overflow: hidden;
    background: #465162;
}

.scene {
    position: absolute;
    left: 0;
    top: 0;
    width: 100%;
    height: 100%;
}

.line, .edges path {
    vector-effect: non-scaling-stroke;
    stroke-width: 1;
}

.edges .halo { stroke: #ddd; stroke-width: 7; stroke-linecap: round; }
.edges .picked { stroke: #000; stroke-width: 3; }

.ticks text {
    font: 24px "Liberation Sans", sans-serif;
    fill: #98a2ae;
}

.face {
    font: 700 14px "Liberation Sans", sans-serif;
    fill: #5e636d;
}

.left { font-size: 16px; }
.top { font-size: 12px; }
.axis { font: 700 28px "Liberation Sans", sans-serif; }

/* browser */
.browser {
    position: absolute;
    left: 8px;
    top: 8px;
    width: 600px;
}

.panel-head {
    display: flex;
    align-items: center;
    height: 50px;
    padding: 0 20px 0 9px;
    border: 1px solid #fff;
    border-right: 3px solid #ccc;
    border-bottom: 3px solid #ccc;
    background: #f1f1f1;
    color: #666;
    font: inherit;
}

.panel-head > svg { margin-right: 20px; }
.panel-head button { margin-left: auto; }

.comments {
    position: absolute;
    left: 8px;
    bottom: 8px;
    width: 600px;
    padding-left: 49px;
}

.tree { padding-top: 10px; }

.tree li {
    display: flex;
    align-items: center;
    height: 40px;
    margin-bottom: 8px;
    padding-left: 73px;
}

.tree .root { padding-left: 36px; }

.arrow { margin-right: 21px; }
.root .arrow { margin-right: 20px; }

.node {
    display: flex;
    align-items: center;
    height: 40px;
    padding: 0 22px 0 6px;
    background: #f1f1f1;
    box-shadow: 0 0 0 5px rgba(255, 255, 255, .05);
    white-space: nowrap;
}

.settings { padding-right: 28px; }
.settings svg { margin-right: 27px; }
.views svg { margin-right: 28px; }
.inner { margin: 0 28px 0 18px; }
.root .node { padding-right: 15px; }

.chosen {
    display: flex;
    align-items: center;
    height: 32px;
    margin: 0 9px 0 12px;
    padding: 0 19px 0 9px;
    background: #999;
    color: #fff;
    font-weight: 700;
}

.chosen svg { margin-right: 32px; }

.node input {
    appearance: none;
    width: 26px;
    height: 26px;
    margin: 0;
    border: 2px solid #444;
    border-radius: 50%;
    background: radial-gradient(#333 0 5px, #aeb6ca 6px, #f4f4f4);
}

/* edit form dialog */
.dialog {
    position: absolute;
    right: 8px;
    top: 248px;
    width: 500px;
    border: 2px solid #ccc;
    background: #f1f1f1;
}

.dialog h2 {
    display: flex;
    align-items: center;
    gap: 9px;
    height: 47px;
    padding: 0 8px 0 22px;
    border-bottom: 2px solid #ccc;
    color: #666;
    font: inherit;
}

.forward { margin-left: auto; }

.fields {
    display: grid;
    grid-template-columns: 1fr 245px;
    row-gap: 6px;
    padding: 4px 14px 0 24px;
}

.fields > span { line-height: 54px; }

.options {
    display: flex;
    flex-wrap: wrap;
    gap: 6px 12px;
}

.options button {
    width: 46px;
    height: 56px;
    border-radius: 2px;
}

.options .select {
    width: 120px;
    gap: 8px;
    color: #fff;
}

.sections {
    padding: 0 26px 0 2px;
    border-bottom: 2px solid #ccc;
    font-weight: 600;
    font-size: 23px;
}

.sections div {
    display: flex;
    align-items: center;
    gap: 19px;
    height: 82px;
    padding-left: 16px;
    border-bottom: 2px solid #c3c3c3;
}

.sections div:first-child { margin-top: -7px; }
.sections div:last-child { height: 75px; border: 0; }

.sections label {
    display: flex;
    align-items: center;
    gap: 12px;
    margin-left: 2px;
}

.sections input {
    appearance: none;
    width: 26px;
    height: 26px;
    margin: 0;
    border: 2px solid #333;
    border-radius: 5px;
    background: linear-gradient(#fff, #bbb);
}

.dialog footer {
    display: flex;
    align-items: center;
    height: 70px;
    padding: 0 22px 0 28px;
    gap: 36px;
}

.dialog footer svg { margin-right: auto; }

.dialog footer button {
    width: 120px;
    height: 40px;
    border: 2px solid #bbb;
    background: #e8e8e8;
    color: #666;
    font-size: 24px;
}

/* navigation bar */
.navbar {
    position: absolute;
    left: 0;
    right: 0;
    bottom: 12px;
    display: flex;
    align-items: center;
    gap: 14px;
    width: 474px;
    height: 48px;
    margin: 0 auto;
    padding: 0 7px;
    background: #f1f1f1;
    color: #333;
}

.navbar .plain { margin-right: 8px; }
.navbar .drop { margin-left: 11px; }
.navbar .near { margin-left: 5px; }

.assist {
    position: absolute;
    right: 25px;
    bottom: 11px;
}

/* timeline */
.timeline {
    display: flex;
    align-items: center;
    height: 100px;
    padding: 0 29px 0 8px;
    border-top: 6px solid #ccc;
}

.playback {
    display: grid;
    grid-template-columns: repeat(5, 50px);
}

.feature {
    position: relative;
    width: 46px;
    height: 48px;
    margin-left: 26px;
    border-radius: 5px;
    background: #d9d9d9;
}

.feature::after {
    content: "";
    position: absolute;
    left: 24px;
    top: 48px;
    width: 4px;
    height: 12px;
    background: #ccc;
}

.marker {
    position: absolute;
    left: 36px;
    top: -4px;
}

.prefs { margin-left: auto; }
```
